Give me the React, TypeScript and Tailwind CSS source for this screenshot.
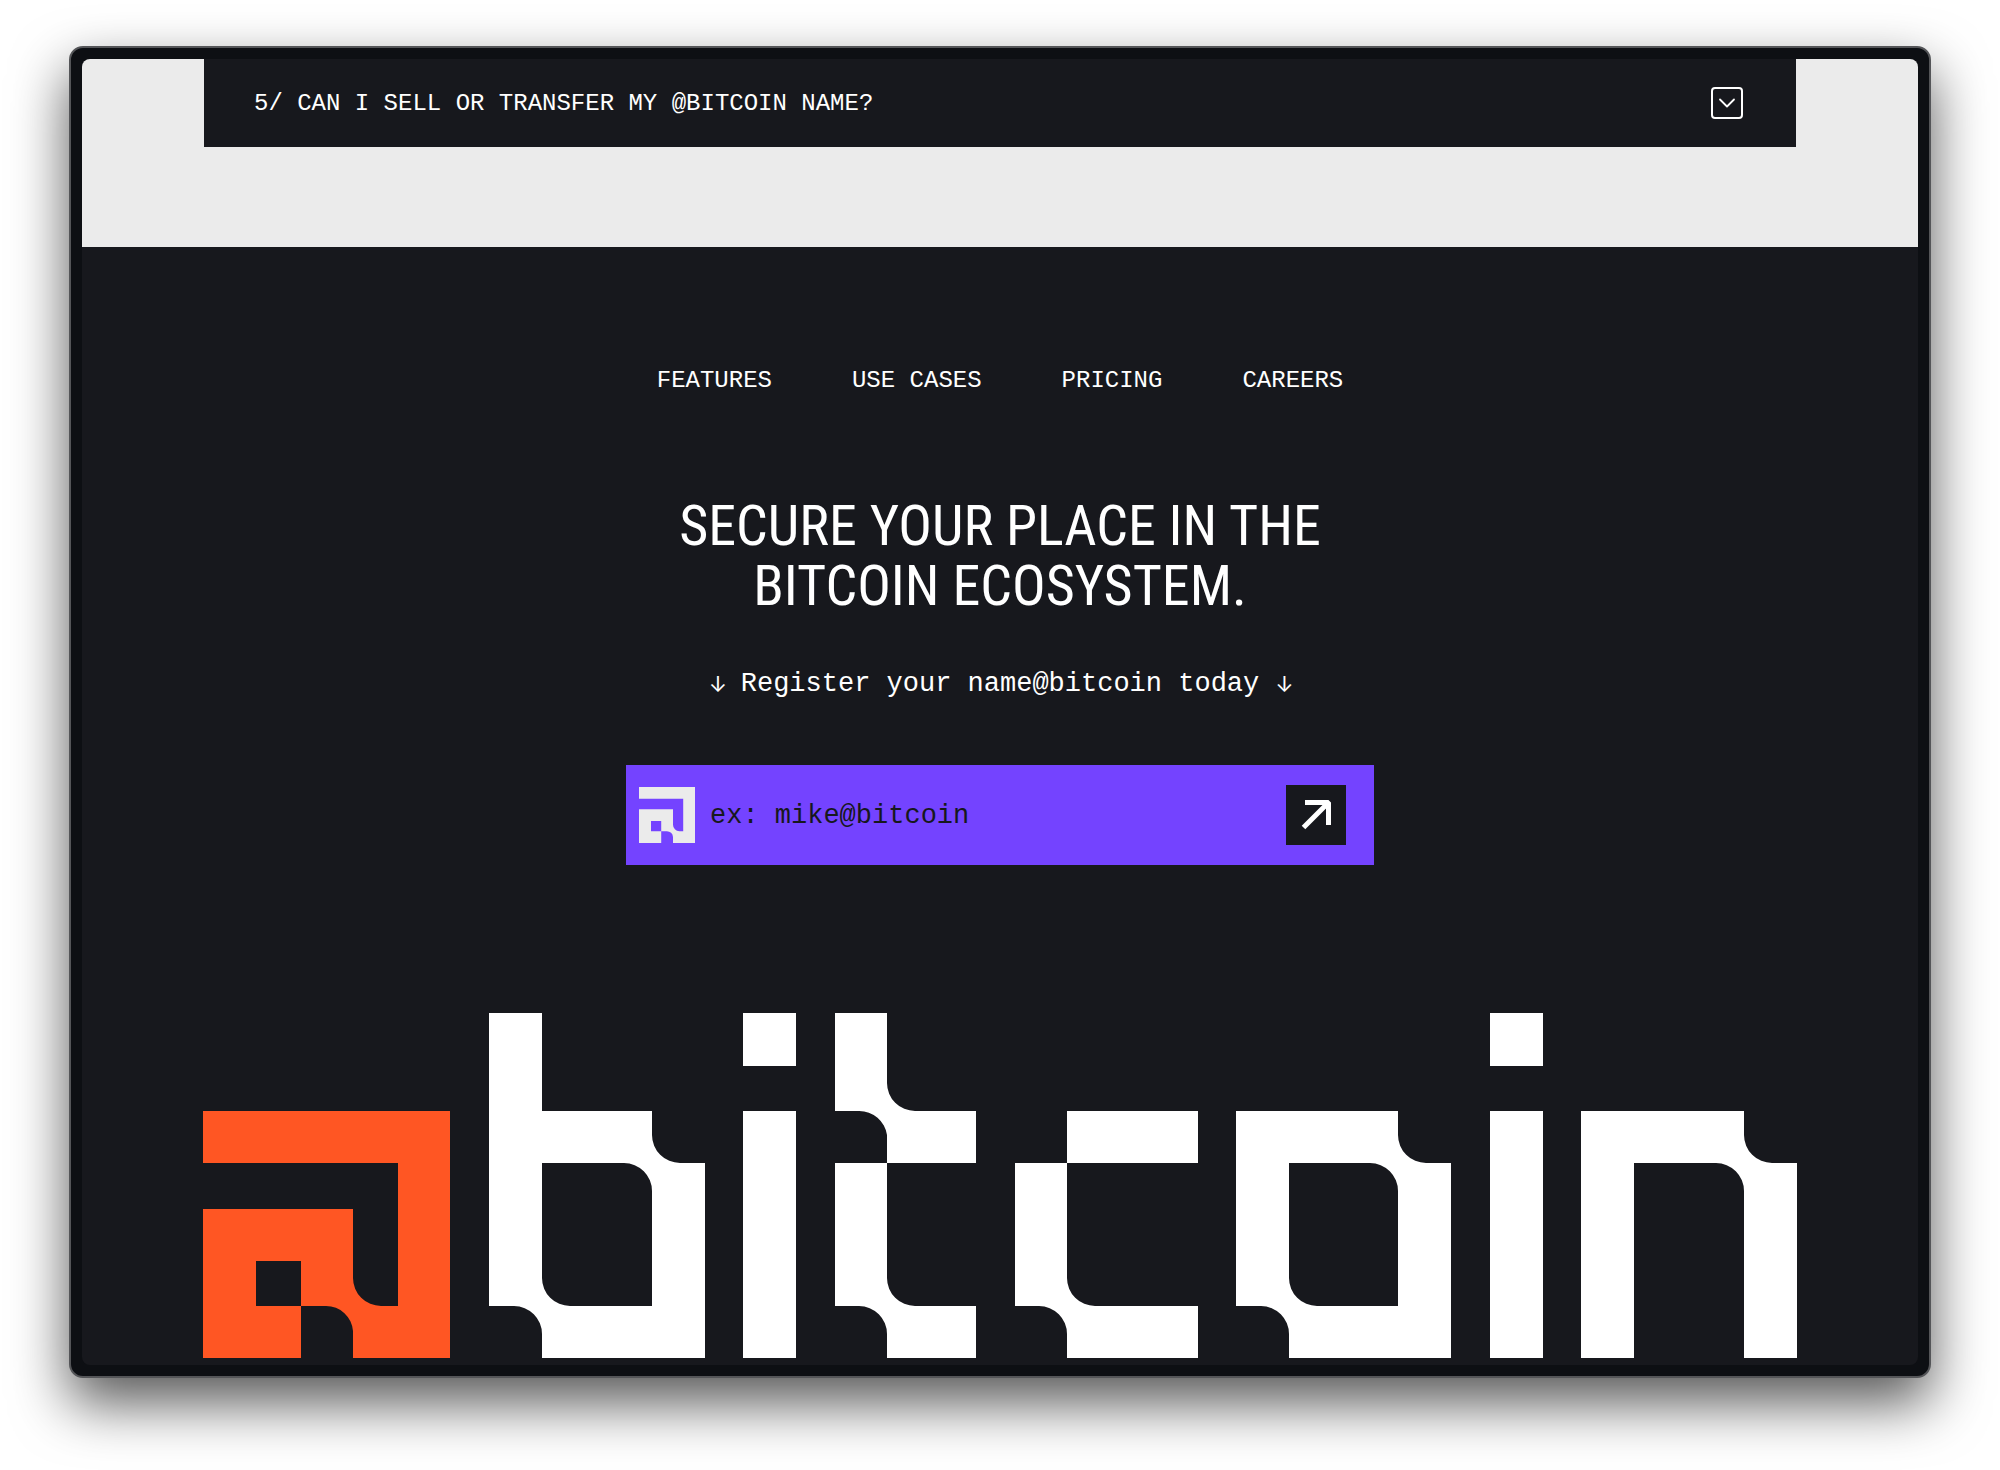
import type { FormEvent } from "react";

const NAV = ["Features", "Use cases", "Pricing", "Careers"];

const MARK =
  "M0 0H247V247H150V220A27 27 0 0 0 123 195H98V247H0V98H150V167A28 28 0 0 0 178 195H195V52H0ZM53 150V195H98V150Z";

function AtMark({ className }: { className: string }) {
  return (
    <svg viewBox="0 0 247 247" className={className} aria-hidden="true">
      <path d={MARK} fill="currentColor" fillRule="evenodd" />
    </svg>
  );
}

function Wordmark() {
  return (
    <svg viewBox="0 0 1594 345" className="block w-full" role="img" aria-label="@bitcoin">
      <path transform="translate(0 98)" d={MARK} fill="#ff5623" fillRule="evenodd" />
      <g fill="#fff" fillRule="evenodd">
        <path d="M286 0H339V98H449V122A28 28 0 0 0 477 150H502V345H339V321A28 28 0 0 0 311 293H286ZM339 150V265A28 28 0 0 0 367 293H449V178A28 28 0 0 0 421 150Z" />
        <path d="M540 0H593V53H540ZM540 98H593V345H540Z" />
        <path d="M632 0H684V70A28 28 0 0 0 712 98H773V150H684V122A28 28 0 0 0 656 98H632ZM632 150H684V265A28 28 0 0 0 712 293H773V345H684V321A28 28 0 0 0 656 293H632Z" />
        <path d="M864 98H995V150H864ZM812 150H864V265A28 28 0 0 0 892 293H995V345H864V321A28 28 0 0 0 836 293H812Z" />
        <path d="M1033 98H1195V122A28 28 0 0 0 1223 150H1248V345H1086V321A28 28 0 0 0 1058 293H1033ZM1086 150V265A28 28 0 0 0 1114 293H1195V178A28 28 0 0 0 1167 150Z" />
        <path d="M1287 0H1340V53H1287ZM1287 98H1340V345H1287Z" />
        <path d="M1378 98H1541V122A28 28 0 0 0 1569 150H1594V345H1541V178A28 28 0 0 0 1513 150H1431V345H1378Z" />
      </g>
    </svg>
  );
}

function DownArrow() {
  return <span className="w-4 text-center font-['Inter',sans-serif] text-[22px]">↓</span>;
}

export default function App() {
  const onSubmit = (e: FormEvent) => e.preventDefault();
  return (
    <div className="min-h-screen bg-white px-[69px] pt-[46px] pb-[91px] font-['Liberation_Mono',monospace] text-white">
      <div className="rounded-[14px] border-2 border-[#545558] bg-[#0d0f13] p-[11px] shadow-[0_25px_56px_rgba(0,0,0,0.66)]">
        <div className="overflow-hidden rounded-lg bg-[#17181d]">
          <section className="bg-[#ebebeb] px-[122px] pb-[100px]">
            <button
              type="button"
              aria-expanded="false"
              className="flex h-[88px] w-full items-center justify-between bg-[#17181d] pr-[53px] pl-[50px] text-left text-2xl uppercase"
            >
              <span className="pt-[2px]">5/ Can I sell or transfer my @bitcoin name?</span>
              <svg viewBox="0 0 32 32" className="size-8" fill="none" stroke="currentColor" aria-hidden="true">
                <rect x="1" y="1" width="30" height="30" rx="3" strokeWidth="2" />
                <path d="M9 12.5L16 19.5L23 12.5" strokeWidth="1.8" strokeLinecap="round" strokeLinejoin="round" />
              </svg>
            </button>
          </section>

          <footer className="px-[121px] pt-[118px] pb-[7px]">
            <nav aria-label="Footer" className="flex justify-center gap-20 text-2xl uppercase leading-8">
              {NAV.map((item) => (
                <a key={item} href="#">
                  {item}
                </a>
              ))}
            </nav>

            <h2 className="mt-[99px] text-center font-['Roboto_Condensed','Liberation_Sans_Narrow',sans-serif] text-[56px] leading-[60px] uppercase">
              Secure your place in the
              <br />
              bitcoin ecosystem.
            </h2>

            <p className="mt-[52px] flex justify-center gap-4 text-[27px] leading-8">
              <DownArrow />
              <span>Register your name@bitcoin today</span>
              <DownArrow />
            </p>

            <form
              onSubmit={onSubmit}
              className="mx-auto mt-[65px] flex h-[100px] w-full max-w-[748px] items-center bg-[#7443ff] pr-7 pl-[13px]"
            >
              <AtMark className="size-14 text-[#ebebeb]" />
              <input
                type="text"
                aria-label="Bitcoin name"
                placeholder="ex: mike@bitcoin"
                className="ml-[15px] min-w-0 flex-1 bg-transparent pt-[2px] text-[27px] text-[#17181d] outline-none placeholder:text-[#17181d]"
              />
              <button type="submit" aria-label="Register" className="size-[60px] bg-[#17181d]">
                <svg viewBox="0 0 60 60" fill="none" stroke="currentColor" strokeWidth="5" strokeLinejoin="bevel" aria-hidden="true">
                  <path d="M19 17.5H42.5V40M17.5 42.5L42 18" />
                </svg>
              </button>
            </form>

            <div className="mt-[148px]">
              <Wordmark />
            </div>
          </footer>
        </div>
      </div>
    </div>
  );
}
